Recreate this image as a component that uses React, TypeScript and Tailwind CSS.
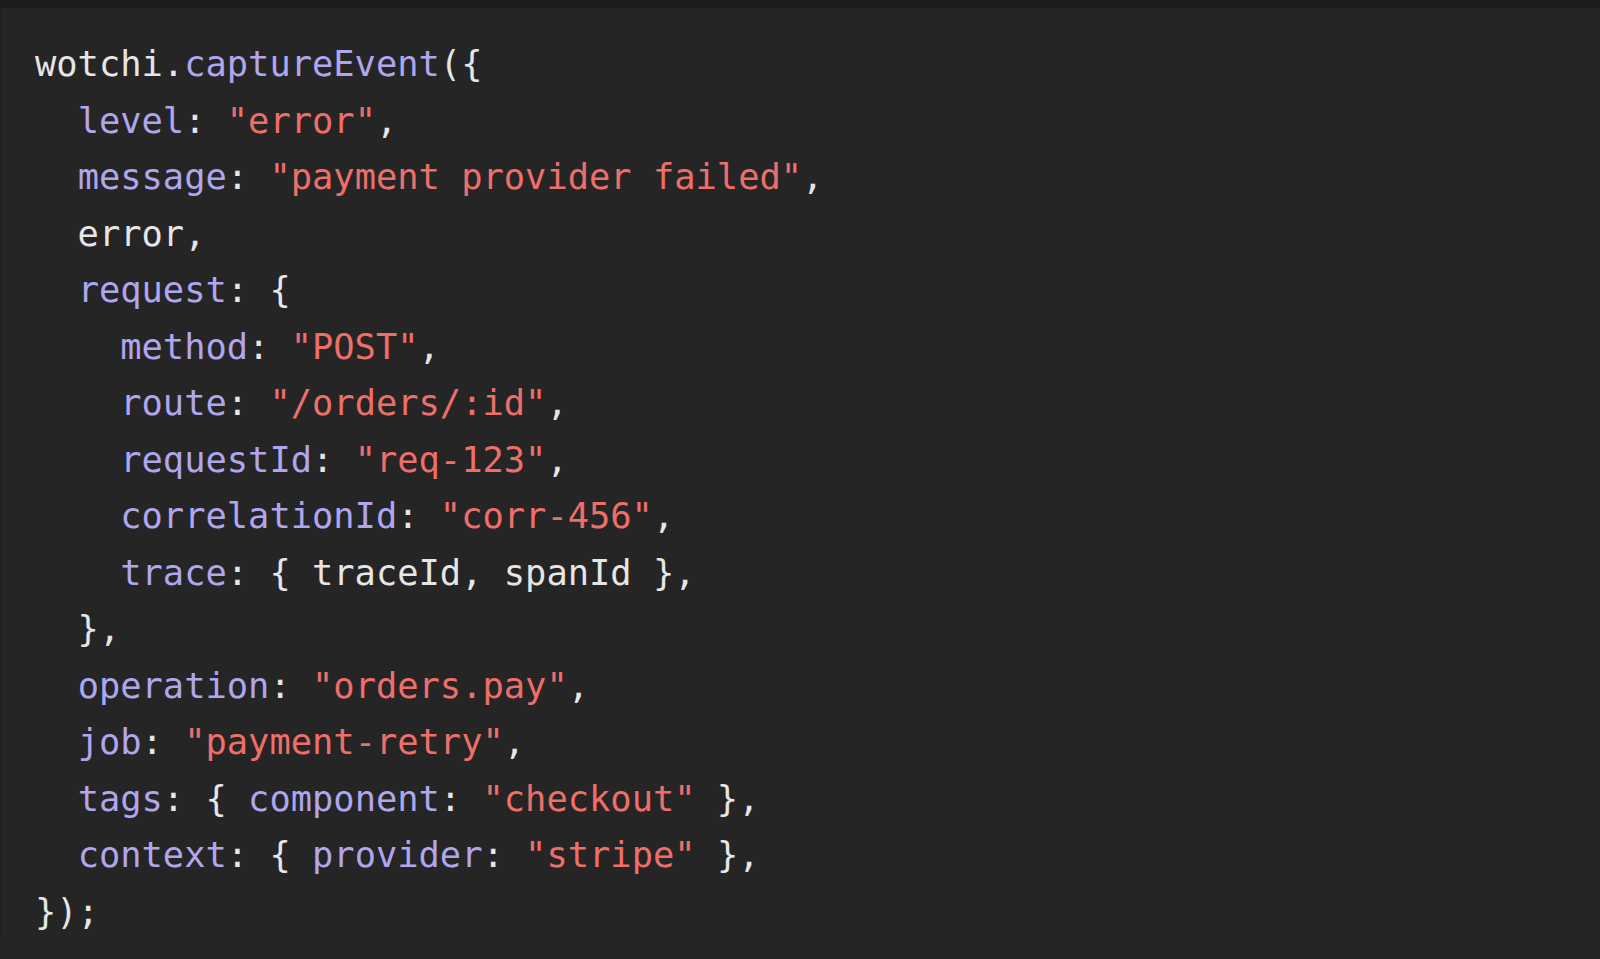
import React from "react";

type Tok = [string, "p" | "k" | "s"];

const lines: Tok[][] = [
  [["wotchi.", "p"], ["captureEvent", "k"], ["({", "p"]],
  [["  ", "p"], ["level", "k"], [": ", "p"], ['"error"', "s"], [",", "p"]],
  [["  ", "p"], ["message", "k"], [": ", "p"], ['"payment provider failed"', "s"], [",", "p"]],
  [["  error,", "p"]],
  [["  ", "p"], ["request", "k"], [": {", "p"]],
  [["    ", "p"], ["method", "k"], [": ", "p"], ['"POST"', "s"], [",", "p"]],
  [["    ", "p"], ["route", "k"], [": ", "p"], ['"/orders/:id"', "s"], [",", "p"]],
  [["    ", "p"], ["requestId", "k"], [": ", "p"], ['"req-123"', "s"], [",", "p"]],
  [["    ", "p"], ["correlationId", "k"], [": ", "p"], ['"corr-456"', "s"], [",", "p"]],
  [["    ", "p"], ["trace", "k"], [": { traceId, spanId },", "p"]],
  [["  },", "p"]],
  [["  ", "p"], ["operation", "k"], [": ", "p"], ['"orders.pay"', "s"], [",", "p"]],
  [["  ", "p"], ["job", "k"], [": ", "p"], ['"payment-retry"', "s"], [",", "p"]],
  [["  ", "p"], ["tags", "k"], [": { ", "p"], ["component", "k"], [": ", "p"], ['"checkout"', "s"], [" },", "p"]],
  [["  ", "p"], ["context", "k"], [": { ", "p"], ["provider", "k"], [": ", "p"], ['"stripe"', "s"], [" },", "p"]],
  [["});", "p"]],
];

const color = {
  p: "text-[#e6e6e6]",
  k: "text-[#b0a6ee]",
  s: "text-[#ee6f6a]",
};

export default function App() {
  return (
    <div className="w-[1600px] h-[959px] overflow-hidden bg-[#252525]">
      <div className="h-[8px] bg-[#1c1c1c]" />
      <pre className="pt-[28px] pl-[34px] text-[35.4px] leading-[56.5px] font-['DejaVu_Sans_Mono',monospace] border-l border-[#1f1f1f]">
        {lines.map((line, i) => (
          <div key={i}>
            {line.map(([text, kind], j) => (
              <span key={j} className={color[kind]}>
                {text}
              </span>
            ))}
          </div>
        ))}
      </pre>
    </div>
  );
}
